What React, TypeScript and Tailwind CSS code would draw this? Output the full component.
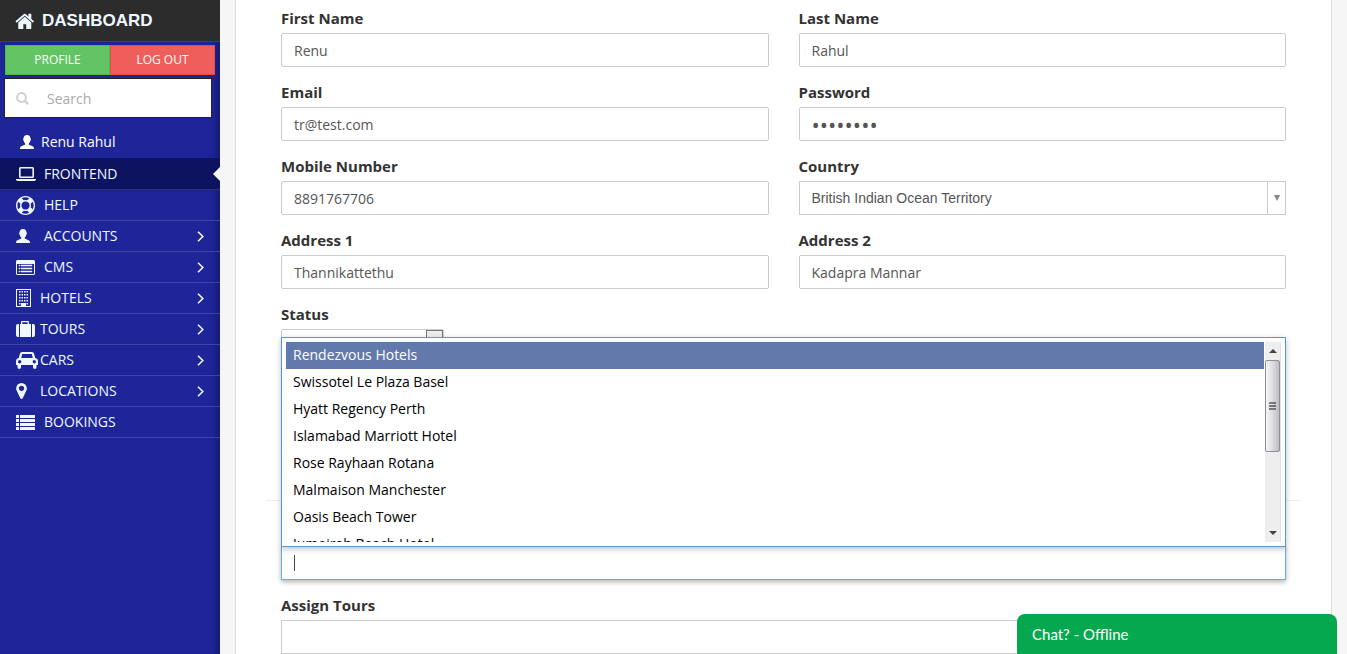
import type { ReactNode } from "react";

const svg = "block shrink-0 overflow-visible";

const HomeIcon = () => (
  <svg className={svg} width="19" height="16" viewBox="60 200 1672 1340" preserveAspectRatio="none" fill="currentColor" aria-hidden="true">
    <path d="M1408 992v480q0 26-19 45t-45 19h-384v-384h-256v384h-384q-26 0-45-19t-19-45v-480q0-1 .5-3t.5-3l575-474 575 474q1 2 1 6zm223-69l-62 74q-8 9-21 11h-3q-13 0-21-7l-692-577-692 577q-12 8-24 7-13-2-21-11l-62-74q-8-10-7-23.5t11-21.5l719-599q32-26 76-26t76 26l244 204v-195q0-14 9-23t23-9h192q14 0 23 9t9 23v408l219 182q10 8 11 21.5t-7 23.5z" />
  </svg>
);

const SearchIcon = () => (
  <svg className={svg} width="13" height="13" viewBox="0 0 13 13" fill="none" stroke="currentColor" strokeWidth="2" aria-hidden="true">
    <circle cx="5.5" cy="5.5" r="4.4" />
    <path d="M8.8 8.8L12.2 12.2" strokeWidth="2.4" />
  </svg>
);

const UserIcon = () => (
  <svg className={svg} width="14" height="14" viewBox="0 0 14 14" fill="currentColor" aria-hidden="true">
    <path d="M7 0C9.3 0 10.4 1.5 10.4 3.3C11.2 3.6 11 5.6 10.2 5.9C9.9 7.2 9.3 8 8.8 8.4V9.6C9.4 10.4 13.2 11 13.8 12.4L14 14H0L.2 12.4C.8 11 4.6 10.4 5.2 9.6V8.4C4.7 8 4.1 7.2 3.8 5.9C3 5.6 2.8 3.6 3.6 3.3C3.6 1.5 4.7 0 7 0Z" />
  </svg>
);

const LaptopIcon = () => (
  <svg className={svg} width="20" height="14" viewBox="0 0 20 14" fill="currentColor" aria-hidden="true">
    <path fillRule="evenodd" d="M4.5 0H16.5Q18 0 18 1.5V9.5Q18 11 16.5 11H4.5Q3 11 3 9.5V1.5Q3 0 4.5 0ZM4.6 1.4V9.6H16.4V1.4Z" />
    <path d="M0 12H20V13Q19 14 18 14H2Q1 14 0 13Z" />
  </svg>
);

const LifeRingIcon = () => (
  <svg className={svg} width="19" height="19" viewBox="0 0 1792 1792" fill="currentColor" aria-hidden="true">
    <path d="M896 0q182 0 348 71t286 191 191 286 71 348-71 348-191 286-286 191-348 71-348-71-286-191-191-286-71-348 71-348 191-286 286-191 348-71zm0 128q-190 0-361 90l194 194q82-28 167-28t167 28l194-194q-171-90-361-90zm-678 1129l194-194q-28-82-28-167t28-167l-194-194q-90 171-90 361t90 361zm678 407q190 0 361-90l-194-194q-82 28-167 28t-167-28l-194 194q171 90 361 90zm0-384q159 0 271.5-112.5t112.5-271.5-112.5-271.5-271.5-112.5-271.5 112.5-112.5 271.5 112.5 271.5 271.5 112.5zm484-217l194 194q90-171 90-361t-90-361l-194 194q28 82 28 167t-28 167z" />
  </svg>
);

const ListAltIcon = () => (
  <svg className={svg} width="19" height="15" viewBox="0 0 19 15" fill="currentColor" aria-hidden="true">
    <path fillRule="evenodd" d="M1 0H18L19 1V14L18 15H1L0 14V1ZM1 4V14H18V4Z" />
    <path d="M3 5H4V6H3ZM5 5H16V6H5ZM3 8H4V9H3ZM5 8H16V9H5ZM3 11H4V12H3ZM5 11H16V12H5Z" stroke="currentColor" strokeWidth=".5" />
  </svg>
);

const BuildingIcon = () => (
  <svg className={svg} width="15" height="18" viewBox="0 0 15 18" fill="currentColor" aria-hidden="true">
    <path fillRule="evenodd" d="M0 0H15V18H0ZM1 1V17H5V14H10V17H14V1Z" />
    <path d="M3 2h1.5v1.5H3zM5.5 2H7v1.5H5.5zM8 2h1.5v1.5H8zM10.5 2H12v1.5h-1.5zM3 5h1.5v1.5H3zM5.5 5H7v1.5H5.5zM8 5h1.5v1.5H8zM10.5 5H12v1.5h-1.5zM3 8h1.5v1.5H3zM5.5 8H7v1.5H5.5zM8 8h1.5v1.5H8zM10.5 8H12v1.5h-1.5zM3 11h1.5v1.5H3zM5.5 11H7v1.5H5.5zM8 11h1.5v1.5H8zM10.5 11H12v1.5h-1.5zM3 14h1.5v1.5H3zM10.5 14H12v1.5h-1.5z" />
  </svg>
);

const SuitcaseIcon = () => (
  <svg className={svg} width="19" height="16" viewBox="0 0 19 16" fill="currentColor" aria-hidden="true">
    <path d="M3 3V16H2Q0 16 0 14V5Q0 3 2 3ZM16 3H17Q19 3 19 5V14Q19 16 17 16H16Z" />
    <path fillRule="evenodd" d="M4 3H5V1Q5 0 6 0H12Q13 0 13 1V3H15V16H4ZM6.3 1.3V3H11.7V1.3Z" />
  </svg>
);

const CarIcon = () => (
  <svg className={svg} width="22" height="17" viewBox="0 0 22 17" fill="currentColor" aria-hidden="true">
    <path fillRule="evenodd" d="M6 0H16Q17.600 0 18 1.500L19.200 6H19.500Q22 6.500 22 9V13H20.500V15Q20.500 17 18.800 17Q17 17 17 15V13H5V15Q5 17 3.200 17Q1.500 17 1.500 15V13H0V9Q0 6.500 2.500 6H2.800L4 1.500Q4.400 0 6 0ZM6.200 2L5.200 6H16.800L15.800 2ZM3.700 8A1.700 1.700 0 1 0 3.700 11.400A1.700 1.700 0 1 0 3.700 8ZM18.300 8A1.700 1.700 0 1 0 18.300 11.400A1.700 1.700 0 1 0 18.300 8Z" />
  </svg>
);

const MarkerIcon = () => (
  <svg className={svg} width="11" height="16" viewBox="384 128 1024 1536" fill="currentColor" aria-hidden="true">
    <path d="M1152 640q0-106-75-181t-181-75-181 75-75 181 75 181 181 75 181-75 75-181zm256 0q0 109-33 179l-364 774q-16 33-47.500 52t-67.500 19-67.500-19-46.500-52l-365-774q-33-70-33-179 0-212 150-362t362-150 362 150 150 362z" />
  </svg>
);

const ListIcon = () => (
  <svg className={svg} width="19" height="15" viewBox="0 0 19 15" fill="currentColor" aria-hidden="true">
    <path d="M0 0H3V3H0ZM4 0H19V3H4ZM0 4H3V7H0ZM4 4H19V7H4ZM0 8H3V11H0ZM4 8H19V11H4ZM0 12H3V15H0ZM4 12H19V15H4Z" />
  </svg>
);

const ChevronIcon = () => (
  <svg className="block" width="7" height="11" viewBox="0 0 7 11" fill="none" stroke="currentColor" strokeWidth="1.6" aria-hidden="true">
    <path d="M1 .7L5.800 5.500L1 10.300" />
  </svg>
);

type NavItem = { text: string; icon: ReactNode; wide?: boolean; sub?: boolean; active?: boolean };

const nav: NavItem[] = [
  { text: "FRONTEND", icon: <LaptopIcon />, wide: true, active: true },
  { text: "HELP", icon: <LifeRingIcon />, wide: true },
  { text: "ACCOUNTS", icon: <UserIcon />, wide: true, sub: true },
  { text: "CMS", icon: <ListAltIcon />, wide: true, sub: true },
  { text: "HOTELS", icon: <BuildingIcon />, sub: true },
  { text: "TOURS", icon: <SuitcaseIcon />, sub: true },
  { text: "CARS", icon: <CarIcon />, sub: true },
  { text: "LOCATIONS", icon: <MarkerIcon />, sub: true },
  { text: "BOOKINGS", icon: <ListIcon />, wide: true },
];

const hotels = [
  "Rendezvous Hotels",
  "Swissotel Le Plaza Basel",
  "Hyatt Regency Perth",
  "Islamabad Marriott Hotel",
  "Rose Rayhaan Rotana",
  "Malmaison Manchester",
  "Oasis Beach Tower",
  "Jumeirah Beach Hotel",
];

function Sidebar() {
  return (
    <aside className="flex w-[220px] shrink-0 flex-col bg-[#1e2599] text-[#f0f8ff]">
      <a href="#" className="flex h-[42px] items-center gap-[7px] border-b border-[#444] bg-[#2c2c2c] pl-4 font-['Liberation_Sans',sans-serif] text-[17px] font-bold">
        <HomeIcon />
        DASHBOARD
      </a>
      <div className="flex grow flex-col shadow-[inset_-7px_0_7px_-4px_#14196b]">
        <div className="flex px-[5px] pt-[3px] text-xs text-white">
          <button className="h-[30px] grow basis-0 border border-[#4cba4c] bg-[#62c462]">PROFILE</button>
          <button className="h-[30px] grow basis-0 border border-[#ec4844] bg-[#ee5f5b]">LOG OUT</button>
        </div>
        <label className="mt-[3px] mr-2 ml-1 flex h-10 items-center gap-[18px] border border-[#222] bg-white pl-[11px] text-[#d0d0d0]">
          <SearchIcon />
          <input type="text" placeholder="Search" aria-label="Search" className="h-full w-full min-w-0 bg-transparent text-sm text-[#555] outline-none placeholder:text-[#aaa]" />
        </label>
        <a href="#" className="mt-2 flex h-8 items-center gap-[7px] pl-5 text-sm text-white">
          <UserIcon />
          Renu Rahul
        </a>
        <nav>
          <ul>
            {nav.map((n) => (
              <li key={n.text} className={n.active ? "relative border-y border-[#2c2f72] border-t-[#0e1361] bg-[#0e1361]" : "border-b border-[#3d43a5]"}>
                <a href="#" className={n.wide ? "flex h-[30px] items-center gap-2 pr-4 pl-4 text-sm" : "flex h-[30px] items-center gap-1 pr-4 pl-4 text-sm"}>
                  <span className="w-5 shrink-0">{n.icon}</span>
                  <span className="grow">{n.text}</span>
                  {n.sub && <ChevronIcon />}
                </a>
                {n.active && (
                  <svg className="absolute top-2 right-0" width="7" height="14" viewBox="0 0 7 14" aria-hidden="true">
                    <path d="M7 0V14L0 7Z" fill="#f6f6f6" />
                  </svg>
                )}
              </li>
            ))}
          </ul>
        </nav>
      </div>
    </aside>
  );
}

const labelClass = "mb-[5px] block text-[15px] leading-5 font-bold text-[#333]";
const inputClass = "block h-[34px] w-full rounded-xs border border-[#ccc] bg-white px-3 text-[#555] outline-none";

function Field({ id, label, value, type = "text" }: { id: string; label: string; value: string; type?: string }) {
  return (
    <div>
      <label htmlFor={id} className={labelClass}>{label}</label>
      <input id={id} type={type} defaultValue={value} className={type === "password" ? `${inputClass} text-[22px]` : `${inputClass} text-sm`} />
    </div>
  );
}

function Scrollbar() {
  return (
    <div className="flex w-4 shrink-0 flex-col items-start border-r border-[#e3e3e3] bg-[#eee]" aria-hidden="true">
      <div className="flex h-[18px] w-full items-center justify-center">
        <svg width="8" height="4" viewBox="0 0 8 4"><path d="M4 0L8 4H0Z" fill="#444" /></svg>
      </div>
      <div className="flex h-[92px] w-[15px] items-center justify-center rounded-xs border border-[#8e8e94] bg-linear-to-r from-[#f6f6f6] via-[#dedee0] to-[#bcbcc4]">
        <svg width="7" height="9" viewBox="0 0 7 9"><path d="M0 1H7M0 4H7M0 7H7" stroke="#555" strokeWidth="1.500" /></svg>
      </div>
      <div className="mt-auto flex h-[18px] w-full items-center justify-center">
        <svg width="8" height="4" viewBox="0 0 8 4"><path d="M0 0H8L4 4Z" fill="#444" /></svg>
      </div>
    </div>
  );
}

export default function App() {
  return (
    <div className="flex h-screen overflow-hidden bg-[#f6f6f6] font-['Open_Sans',sans-serif]">
      <Sidebar />
      <main className="min-w-0 grow pr-[15px] pl-[15px]">
        <form className="min-h-full border-x border-[#ddd] bg-white px-[30px] pt-2">
          <div className="grid grid-cols-2 gap-x-[30px] gap-y-[15px] px-[15px]">
            <Field id="first" label="First Name" value="Renu" />
            <Field id="last" label="Last Name" value="Rahul" />
            <Field id="email" label="Email" value="tr@test.com" />
            <Field id="password" label="Password" value="password" type="password" />
            <Field id="mobile" label="Mobile Number" value="8891767706" />
            <div>
              <label htmlFor="country" className={labelClass}>Country</label>
              <div className="relative">
                <select id="country" className="block h-[34px] w-full appearance-none border border-[#ccc] bg-white px-3 font-['Liberation_Sans',sans-serif] text-sm text-[#555] outline-none">
                  <option>British Indian Ocean Territory</option>
                </select>
                <span className="pointer-events-none absolute inset-y-0 right-0 flex w-[19px] items-center justify-center border border-[#ccc] bg-white">
                  <svg width="6" height="6" viewBox="0 0 6 6" aria-hidden="true"><path d="M0 0H6L3 6Z" fill="#888" /></svg>
                </span>
              </div>
            </div>
            <Field id="address1" label="Address 1" value="Thannikattethu" />
            <Field id="address2" label="Address 2" value="Kadapra Mannar" />
            <div>
              <label htmlFor="status" className={labelClass}>Status</label>
              <div className="relative w-[163px]">
                <select id="status" className="block h-[34px] w-full appearance-none rounded-xs border border-[#ccc] bg-white outline-none" />
                <span className="pointer-events-none absolute top-px right-px bottom-px w-[17px] border border-[#777] bg-[#eee]" />
              </div>
            </div>
          </div>

          <hr className="mt-[137px] border-[#eee]" />

          <div className="px-[15px] pt-[45px]">
            <div className="relative">
              <input type="text" aria-label="Assign Hotels" className="block h-[34px] w-full border border-[#66afe9] bg-white px-3 text-sm text-[#555] caret-transparent shadow-[0_2px_5px_rgba(0,0,0,0.3)] outline-none" />
              <span className="pointer-events-none absolute top-[9px] left-[13px] h-4 w-px bg-[#444]" />
              <div className="absolute inset-x-0 bottom-[33px] flex border border-[#5897db] bg-white p-1 shadow-[0_2px_6px_rgba(0,0,0,0.25)]">
                <ul className="h-[200px] grow overflow-hidden text-sm leading-[25px] text-black" role="listbox" aria-label="Hotels">
                  {hotels.map((h, i) => (
                    <li key={h} role="option" aria-selected={i === 0} className={i === 0 ? "mr-px bg-[#6479ab] px-[7px] pb-0.5 text-white" : "mr-px px-[7px] pb-0.5"}>
                      {h}
                    </li>
                  ))}
                </ul>
                <Scrollbar />
              </div>
            </div>
            <label htmlFor="tours" className={`${labelClass} mt-[15px]`}>Assign Tours</label>
            <input id="tours" type="text" className="block h-[34px] w-full border border-[#ccc] bg-white px-3 text-sm text-[#555] outline-none" />
          </div>
        </form>
      </main>
      <button className="fixed right-[10px] bottom-0 h-10 w-80 rounded-t-lg bg-[#05a84e] px-[15px] text-left font-['Lato',sans-serif] text-[15px] text-white">
        Chat? - Offline
      </button>
    </div>
  );
}
